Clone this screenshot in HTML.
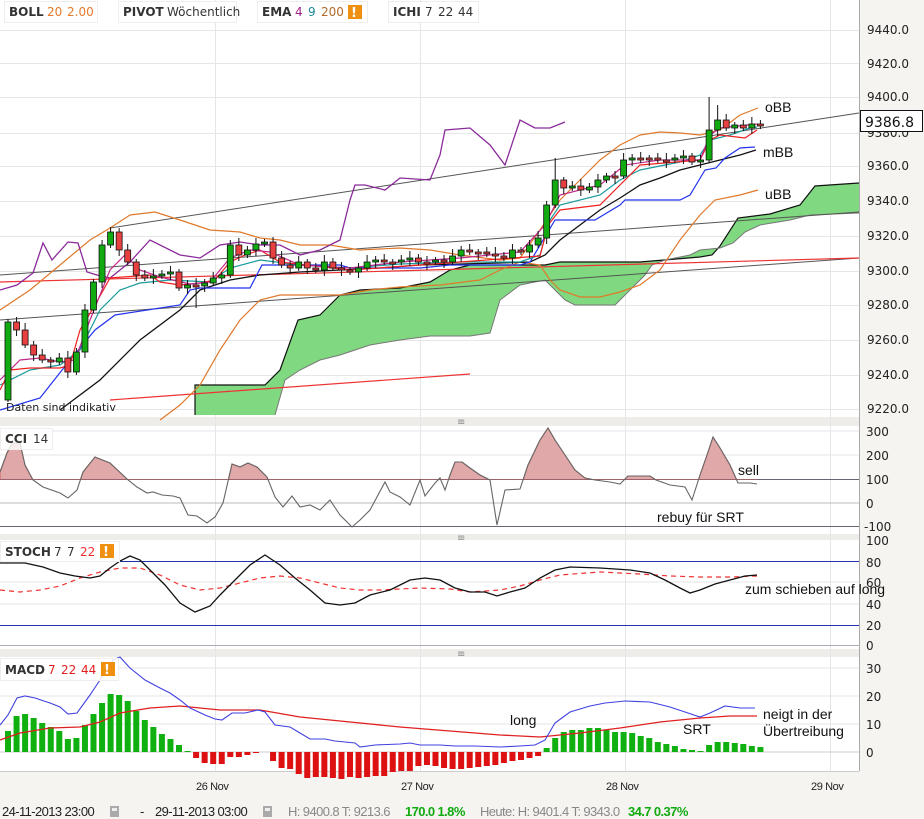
<!DOCTYPE html>
<html><head><meta charset="utf-8"><style>
body{margin:0;width:924px;height:819px;overflow:hidden;background:#f5f4f0;font-family:"DejaVu Sans",sans-serif}
svg{display:block}
.ax{font:12px "DejaVu Sans",sans-serif;fill:#222}
.an{font:14px "Liberation Sans",sans-serif;fill:#111}
.hb{font:bold 12px "DejaVu Sans",sans-serif;fill:#333}
.hn{font:12px "DejaVu Sans",sans-serif}
.ft{font:13px "Liberation Sans",sans-serif;fill:#222;letter-spacing:-0.6px}
</style></head><body>
<svg id="s" width="924" height="819" xmlns="http://www.w3.org/2000/svg">
<rect x="0" y="0" width="859" height="417" fill="#fff"/>
<rect x="0" y="426" width="859" height="108" fill="#fff"/>
<rect x="0" y="540" width="859" height="109" fill="#fff"/>
<rect x="0" y="657" width="859" height="114" fill="#fff"/>
<rect x="859" y="0" width="65" height="800" fill="#f5f4f0"/>
<line x1="859.5" y1="0" x2="859.5" y2="771" stroke="#aaa"/>
<rect x="0" y="417" width="859" height="9" fill="#eeede9"/>
<rect x="0" y="534" width="859" height="6" fill="#eeede9"/>
<rect x="0" y="649" width="859" height="8" fill="#eeede9"/>
<line x1="0" y1="771.5" x2="859" y2="771.5" stroke="#ccc"/>
<text x="457" y="425" font-size="10" fill="#888">≡</text>
<text x="457" y="541" font-size="10" fill="#888">≡</text>
<text x="457" y="657" font-size="10" fill="#888">≡</text>
<g id="grid" stroke="#e6e6e6" stroke-width="1"></g>
<path d="M195,385 L265,385 L280,370 L298,320 L320,315 L340,295 L360,290 L400,288 L430,282 L450,270 L470,265 L545,265 L560,262 L640,262 L700,257 L712,255 L720,246 L738,218 L770,214 L800,205 L815,186 L859,183 L859,213 L810,215 L790,220 L760,225 L745,232 L733,243 L720,248 L700,250 L690,255 L665,260 L652,265 L645,275 L630,290 L615,305 L575,305 L565,300 L545,280 L520,285 L500,300 L490,333 L470,336 L430,336 L400,340 L370,345 L340,355 L320,360 L300,370 L285,380 L275,415 L195,415 Z" fill="#80d880" stroke="none"/>
<polyline points="195,415 195,385 265,385 280,370 298,320 320,315 340,295 360,290 400,288 430,282 450,270 470,265 545,265 560,262 640,262 700,257 712,255 720,246 738,218 770,214 800,205 815,186 859,183" fill="none" stroke="#111" stroke-width="1.2"/>
<polyline points="275,415 285,380 300,370 320,360 340,355 370,345 400,340 430,336 470,336 490,333 500,300 520,285 545,280 565,300 575,305 615,305 630,290 645,275 652,265 665,260 690,255 700,250 720,248 733,243 745,232 760,225 790,220 810,215 859,213" fill="none" stroke="#777" stroke-width="1"/>
<line x1="110" y1="228" x2="859" y2="113" stroke="#555"/>
<line x1="0" y1="275" x2="859" y2="212" stroke="#555"/>
<line x1="0" y1="320" x2="859" y2="258" stroke="#555"/>
<line x1="0" y1="282" x2="859" y2="258" stroke="#e33" stroke-width="1.2"/>
<line x1="110" y1="400" x2="470" y2="374" stroke="#e33" stroke-width="1.2"/>
<polyline fill="none" stroke="#e0782a" stroke-width="1.2" points="0,310 30,290 60,265 90,240 110,228 130,215 155,212 180,220 210,230 240,232 260,238 280,240 300,245 330,245 360,250 400,248 430,250 460,255 500,260 520,258 540,230 560,200 580,180 600,160 620,145 640,135 660,132 680,133 700,135 720,130 740,115 758,108"/>
<polyline fill="none" stroke="#e0782a" stroke-width="1.2" points="160,420 180,405 200,385 220,350 240,320 260,300 280,295 300,295 340,295 370,290 400,287 440,285 480,280 500,270 520,262 540,265 550,280 560,290 580,297 600,297 620,292 640,285 660,270 680,240 700,215 715,200 740,195 758,190"/>
<polyline fill="none" stroke="#111" stroke-width="1.3" points="60,410 100,380 140,340 180,310 200,290 230,280 260,275 300,272 340,270 380,268 420,265 460,264 500,263 530,262 545,255 560,240 580,225 600,210 620,198 640,185 660,178 680,170 700,165 720,160 740,155 756,150"/>
<polyline fill="none" stroke="#8a2a9a" stroke-width="1.3" points="0,290 17,285 33,273 43,243 52,260 68,242 78,243 87,272 97,275 110,278 130,262 150,240 180,255 200,258 220,245 240,242 260,245 280,245 300,255 320,250 340,240 350,200 355,185 365,185 385,190 400,178 430,180 440,155 445,130 470,128 490,145 505,165 520,120 535,128 550,128 565,122"/>
<polyline fill="none" stroke="#2233ee" stroke-width="1.2" points="0,410 40,398 70,360 95,330 115,315 180,305 190,290 200,288 250,288 262,265 340,265 350,268 420,268 450,265 520,265 530,262 555,220 595,220 620,205 625,200 680,200 690,195 705,170 716,168 725,158 740,148 755,147"/>
<polyline fill="none" stroke="#1a9a9a" stroke-width="1.2" points="0,385 30,370 60,365 80,350 100,310 120,290 140,283 170,280 210,282 230,268 260,260 300,265 350,268 400,264 460,262 520,262 540,255 550,220 560,205 600,195 620,180 640,170 680,162 700,155 710,140 730,135 750,128 757,127"/>
<polyline fill="none" stroke="#f02020" stroke-width="1.2" points="0,390 10,370 30,368 60,368 70,365 80,330 95,305 110,278 150,275 160,282 180,285 200,283 215,280 230,262 245,255 260,250 280,262 350,270 420,265 460,262 540,256 548,225 560,210 600,205 620,185 640,165 700,160 710,140 720,135 745,138 757,130"/>
<polyline fill="none" stroke="#c02a8a" stroke-width="1.2" points="0,380 20,360 40,358 60,362 75,360 90,320 110,270 125,255 140,270 160,277 190,284 210,282 230,258 250,250 270,252 300,265 350,268 400,262 460,258 520,252 545,225 560,195 600,185 625,165 660,160 700,160 710,135 720,128 757,124"/>
<g id="candles"></g>
<g class="ax">
<text x="867" y="34">9440.0</text><text x="867" y="68">9420.0</text><text x="867" y="101">9400.0</text><text x="867" y="137">9380.0</text><text x="867" y="170">9360.0</text><text x="867" y="205">9340.0</text><text x="867" y="240">9320.0</text><text x="867" y="275">9300.0</text><text x="867" y="309">9280.0</text><text x="867" y="344">9260.0</text><text x="867" y="379">9240.0</text><text x="867" y="413">9220.0</text>
</g>
<rect x="860.5" y="110.5" width="62" height="21" fill="#fff" stroke="#111"/>
<text x="865" y="127" font-family="DejaVu Sans" font-size="14" fill="#111">9386.8</text>
<text class="an" x="765" y="112">oBB</text>
<text class="an" x="763" y="157">mBB</text>
<text class="an" x="765" y="199">uBB</text>
<text x="6" y="411" font-family="DejaVu Sans" font-size="11" fill="#222">Daten sind indikativ</text>
<g>
<rect x="4.5" y="1.5" width="93" height="21" fill="#fff" stroke="#eee"/>
<text class="hb" x="9" y="16">BOLL</text><text class="hn" x="47" y="16" fill="#e87a2a">20</text><text class="hn" x="67" y="16" fill="#e87a2a">2.00</text>
<rect x="118.5" y="1.5" width="118" height="21" fill="#fff" stroke="#eee"/>
<text class="hb" x="123" y="16">PIVOT</text><text class="hn" x="167" y="16" fill="#333">Wöchentlich</text>
<rect x="257.5" y="1.5" width="110" height="21" fill="#fff" stroke="#eee"/>
<text class="hb" x="262" y="16">EMA</text><text class="hn" x="295" y="16" fill="#a0208a">4</text><text class="hn" x="308" y="16" fill="#1a8a9a">9</text><text class="hn" x="321" y="16" fill="#b06a2a">200</text>
<rect x="348" y="5" width="14" height="14" fill="#f09010"/><text x="351" y="17" font-weight="bold" font-size="13" fill="#fff">!</text>
<rect x="388.5" y="1.5" width="90" height="21" fill="#fff" stroke="#eee"/>
<text class="hb" x="393" y="16">ICHI</text><text class="hn" x="425" y="16" fill="#333">7</text><text class="hn" x="438" y="16" fill="#333">22</text><text class="hn" x="458" y="16" fill="#333">44</text>
</g>
<line x1="0" y1="431" x2="859" y2="431" stroke="#e6e6e6"/><line x1="0" y1="455" x2="859" y2="455" stroke="#e6e6e6"/>
<line x1="0" y1="503" x2="859" y2="503" stroke="#bbb"/>
<line x1="0" y1="479.5" x2="859" y2="479.5" stroke="#667"/>
<line x1="0" y1="526.5" x2="859" y2="526.5" stroke="#667"/>
<clipPath id="cc"><rect x="0" y="420" width="859" height="59.5"/></clipPath>
<polygon id="ccif" clip-path="url(#cc)" fill="#e0a8a8" stroke="#d06060" points=""/>
<polyline id="ccil" fill="none" stroke="#666" stroke-width="1.1" points=""/>
<rect x="0.5" y="428.5" width="52" height="21" fill="#fff" fill-opacity=".8" stroke="#eee"/>
<text class="hb" x="5" y="443">CCI</text><text class="hn" x="33" y="443" fill="#333">14</text>
<g class="ax"><text x="866" y="436">300</text><text x="866" y="460">200</text><text x="866" y="484">100</text><text x="866" y="508">0</text><text x="864" y="531">-100</text></g>
<text class="an" x="738" y="475">sell</text>
<text class="an" x="657" y="522">rebuy für SRT</text>
<line x1="0" y1="582" x2="859" y2="582" stroke="#e6e6e6"/><line x1="0" y1="604" x2="859" y2="604" stroke="#e6e6e6"/>
<line x1="0" y1="645.5" x2="859" y2="645.5" stroke="#aab"/>
<line x1="0" y1="561.5" x2="859" y2="561.5" stroke="#2233aa"/>
<line x1="0" y1="625.5" x2="859" y2="625.5" stroke="#2233aa"/>
<polyline fill="none" stroke="#f03030" stroke-width="1.2" stroke-dasharray="5,4" points="0,590 20,592 40,590 60,586 80,578 100,572 120,568 140,568 160,575 180,585 200,590 220,588 240,583 260,578 280,576 300,578 320,583 340,588 360,590 380,590 400,589 420,588 450,589 470,592 500,590 520,586 540,580 560,575 600,572 640,574 670,576 700,577 730,577 757,576"/>
<polyline fill="none" stroke="#111" stroke-width="1.3" points="0,563 25,563 43,567 60,573 75,576 90,578 100,576 110,568 120,561 130,556 140,560 150,570 165,585 180,603 195,612 210,606 220,595 235,580 250,565 265,555 280,565 295,578 310,590 325,603 340,605 355,603 370,595 390,590 410,580 425,578 440,580 455,588 470,592 485,592 497,596 510,592 525,588 540,578 555,570 570,567 600,568 630,570 650,573 665,580 680,588 690,593 700,590 715,584 730,580 745,576 757,575"/>
<rect x="0.5" y="541.5" width="119" height="20" fill="#fff" stroke="#eee"/>
<text class="hb" x="5" y="556">STOCH</text><text class="hn" x="54" y="556" fill="#333">7</text><text class="hn" x="67" y="556" fill="#333">7</text><text class="hn" x="80" y="556" fill="#f03030">22</text>
<rect x="100" y="544" width="14" height="14" fill="#f09010"/><text x="103" y="556" font-weight="bold" font-size="13" fill="#fff">!</text>
<g class="ax"><text x="866" y="545">100</text><text x="866" y="567">80</text><text x="866" y="587">60</text><text x="866" y="609">40</text><text x="866" y="630">20</text><text x="866" y="650">0</text></g>
<text class="an" x="745" y="594">zum schieben auf long</text>
<line x1="0" y1="668" x2="859" y2="668" stroke="#e6e6e6"/><line x1="0" y1="696" x2="859" y2="696" stroke="#e6e6e6"/><line x1="0" y1="724" x2="859" y2="724" stroke="#e6e6e6"/><line x1="0" y1="752" x2="859" y2="752" stroke="#ccc"/>
<g id="macd"></g>
<polyline fill="none" stroke="#e02020" stroke-width="1.3" points="0,740 20,733 50,728 80,727 100,722 120,713 150,708 180,706 220,710 260,710 300,717 350,722 400,727 450,731 500,735 540,737 580,733 620,728 660,722 700,718 730,716 757,716"/>
<polyline fill="none" stroke="#4040e0" stroke-width="1.1" points="0,725 8,715 17,698 25,696 35,698 50,703 60,707 68,714 77,713 90,695 100,680 113,660 120,657 130,668 145,680 160,688 170,693 180,700 190,708 205,715 215,719 222,720 232,713 245,713 258,710 265,712 275,725 290,727 300,733 310,739 325,739 335,741 355,743 360,747 375,745 400,744 410,743 420,745 440,745 455,746 475,746 500,747 520,746 535,745 545,740 555,723 570,712 590,706 605,703 625,701 650,702 670,707 685,712 700,717 710,713 725,706 740,708 755,708"/>
<rect x="0.5" y="658.5" width="118" height="22" fill="#fff" fill-opacity=".85" stroke="#eee"/>
<text class="hb" x="5" y="674">MACD</text><text class="hn" x="48" y="674" fill="#e02020">7</text><text class="hn" x="61" y="674" fill="#e02020">22</text><text class="hn" x="81" y="674" fill="#e02020">44</text>
<rect x="101" y="662" width="14" height="14" fill="#f09010"/><text x="104" y="674" font-weight="bold" font-size="13" fill="#fff">!</text>
<g class="ax"><text x="866" y="673">30</text><text x="866" y="701">20</text><text x="866" y="729">10</text><text x="866" y="757">0</text></g>
<text class="an" x="510" y="725">long</text>
<text class="an" x="683" y="734">SRT</text>
<text class="an" x="763" y="719">neigt in der</text>
<text class="an" x="763" y="736">Übertreibung</text>
<g font-family="Liberation Sans" font-size="11" fill="#222" letter-spacing="-0.4"><text x="196" y="790">26 Nov</text><text x="401" y="790">27 Nov</text><text x="606" y="790">28 Nov</text><text x="811" y="790">29 Nov</text></g>
<text class="ft" x="2" y="816">24-11-2013 23:00</text>
<rect x="110" y="806" width="9" height="11" fill="#aaa"/><rect x="112" y="808" width="5" height="3" fill="#eee"/>
<text class="ft" x="140" y="816">-</text>
<text class="ft" x="155" y="816">29-11-2013 03:00</text>
<rect x="263" y="806" width="9" height="11" fill="#aaa"/><rect x="265" y="808" width="5" height="3" fill="#eee"/>
<text class="ft" x="288" y="816" style="fill:#888">H: 9400.8  T: 9213.6</text>
<text class="ft" x="405" y="816" style="fill:#1a1;font-weight:bold">170.0  1.8%</text>
<text class="ft" x="480" y="816" style="fill:#888">Heute: H: 9401.4  T: 9343.0</text>
<text class="ft" x="628" y="816" style="fill:#1a1;font-weight:bold">34.7  0.37%</text>
</svg>
<script>
(function(){
var NS="http://www.w3.org/2000/svg";
function el(p,t,a){var e=document.createElementNS(NS,t);for(var k in a)e.setAttribute(k,a[k]);p.appendChild(e);return e;}
var g=document.getElementById("grid");
[30,63,97,133,166,201,236,271,305,340,375,409].forEach(function(y){el(g,"line",{x1:0,x2:859,y1:y+.5,y2:y+.5});});
[215,420,625,830].forEach(function(x){el(g,"line",{x1:x+.5,x2:x+.5,y1:0,y2:771});});
var c=[322,330,345,355,360,362,358,372,352,310,282,245,232,250,262,275,278,276,274,272,288,285,286,283,278,275,245,255,250,244,242,258,265,268,262,268,270,262,268,270,272,268,262,260,262,262,260,258,262,262,260,262,256,250,252,252,254,256,258,250,252,245,238,205,180,188,186,190,187,180,176,176,160,158,158,158,160,160,158,156,162,160,130,120,128,125,128,124,124];
var cg=document.getElementById("candles");
var prev=400;
for(var i=0;i<c.length;i++){var x=8+i*8.55,o=prev,cl=c[i];var tp=Math.min(o,cl),bt=Math.max(o,cl);if(bt-tp<2){bt=tp+2;}
var hi=tp-3-((i*7)%5),lo=bt+3+((i*3)%6);
if(i==12)hi=227;if(i==64)hi=158;if(i==82)hi=97;if(i==83)hi=105;if(i==0)lo=402;if(i==22)lo=308;
el(cg,"line",{x1:x,x2:x,y1:hi,y2:lo,stroke:"#111"});
el(cg,"rect",{x:x-3,y:tp,width:6,height:bt-tp,fill:cl<o?"#11aa11":"#e84040",stroke:"#111","stroke-width":0.8});
prev=cl;}
var cci=[[0,472],[7,453],[12,443],[20,443],[25,465],[33,480],[43,487],[60,493],[68,498],[77,490],[83,472],[95,457],[110,463],[127,479],[137,487],[147,493],[153,492],[162,495],[173,496],[180,498],[188,515],[197,516],[207,523],[215,517],[223,503],[232,464],[240,467],[248,463],[257,467],[267,477],[275,497],[283,507],[292,496],[300,507],[310,505],[320,510],[330,500],[340,515],[352,527],[360,520],[370,510],[385,482],[390,492],[400,497],[410,505],[420,480],[425,496],[435,483],[440,478],[445,490],[450,475],[455,462],[462,462],[470,468],[480,475],[490,480],[497,525],[505,490],[520,489],[528,465],[540,440],[548,428],[555,440],[565,455],[575,470],[585,478],[595,480],[610,482],[620,484],[628,476],[650,476],[656,480],[670,485],[685,487],[692,500],[700,475],[707,455],[713,437],[720,448],[730,465],[738,483],[750,483],[757,484]];
var s=cci.map(function(p){return p.join(",")}).join(" ");
document.getElementById("ccil").setAttribute("points",s);
document.getElementById("ccif").setAttribute("points","0,479.5 "+s+" 757,479.5");
var h=[21,36,38,34,29,25,21,13,14,27,38,49,58,57,51,41,32,25,18,13,7,1,-6,-11,-12,-12,-5,-5,-3,-1,0,-9,-16,-17,-22,-26,-25,-25,-26,-27,-25,-26,-25,-24,-24,-20,-19,-19,-14,-13,-14,-16,-17,-17,-16,-15,-14,-13,-11,-9,-8,-6,-4,4,14,20,22,22,24,24,22,20,20,19,16,14,10,8,6,3,2,1,7,10,10,9,8,6,5];
var mg=document.getElementById("macd");
for(var j=0;j<h.length;j++){var xx=8+j*8.55,v=h[j];if(v==0)continue;
el(mg,"rect",{x:xx-3,y:v>0?752-v:752,width:6,height:Math.abs(v),fill:v>0?"#11b011":"#dd1111"});}
})();
</script>
</body></html>
